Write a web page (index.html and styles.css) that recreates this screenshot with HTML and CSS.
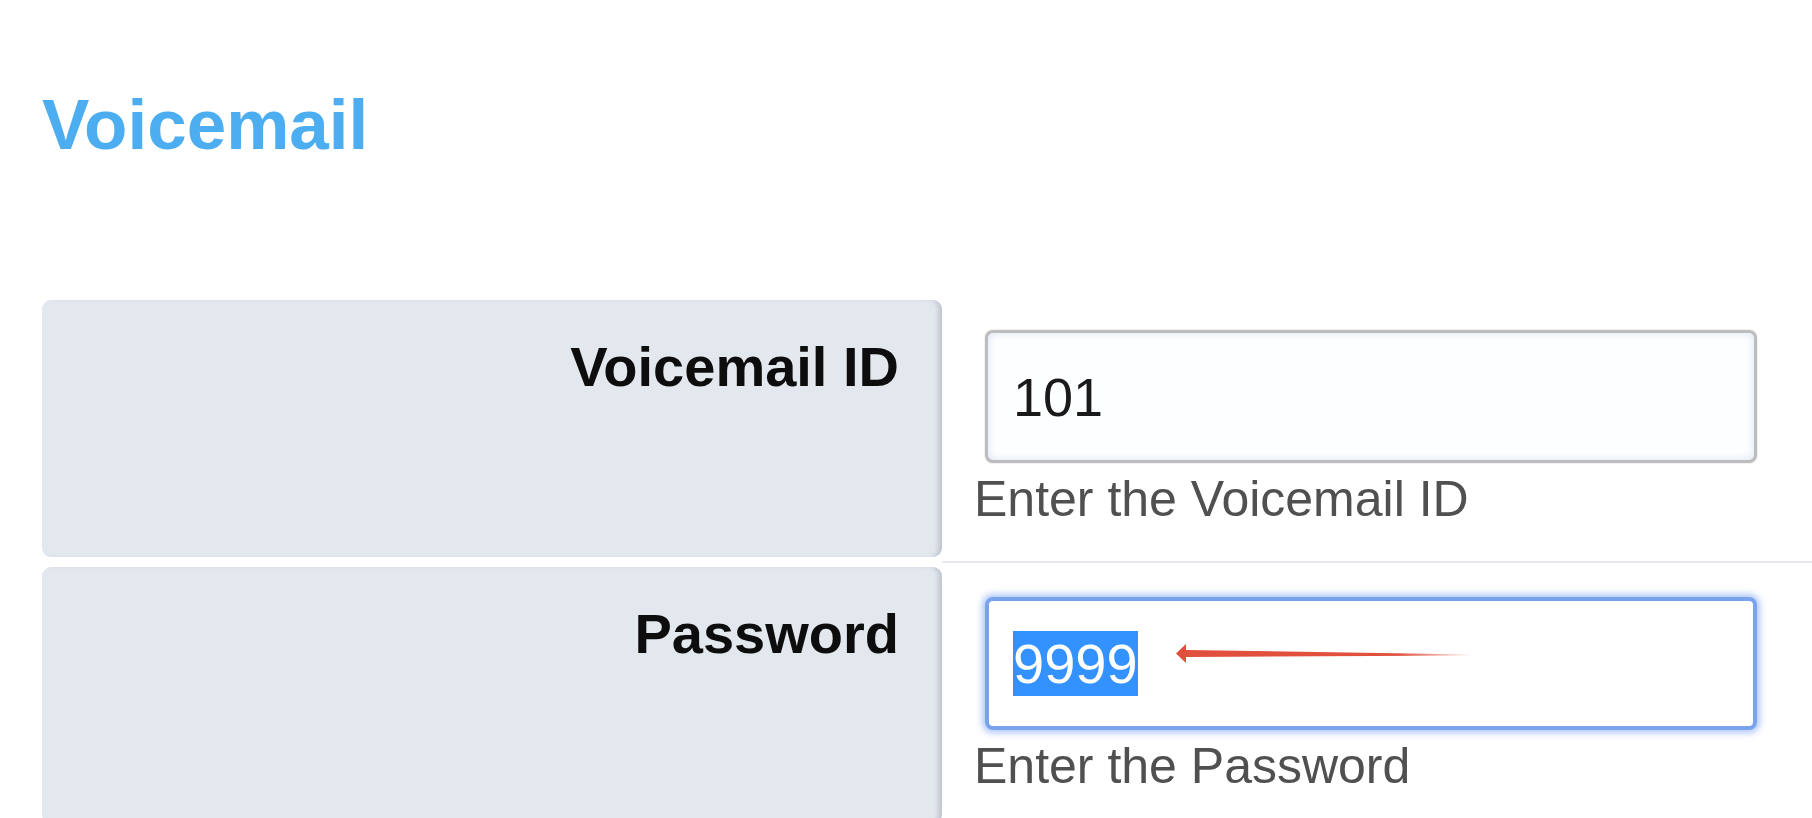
FILE: index.html
```html
<!DOCTYPE html>
<html lang="en">
<head>
<meta charset="utf-8">
<title>Voicemail</title>
<link rel="stylesheet" href="styles.css">
</head>
<body>
<div class="page">
  <h1 class="title">Voicemail</h1>
  <div class="form">
    <div class="row">
      <div class="label">Voicemail ID</div>
      <div class="cell">
        <div class="input"><span class="value">101</span></div>
        <div class="help">Enter the Voicemail ID</div>
      </div>
    </div>
    <div class="row">
      <div class="label">Password</div>
      <div class="cell">
        <div class="input focused">
          <span class="sel">9999</span>
          <svg class="arrow" width="300" height="26" viewBox="0 0 300 26" aria-hidden="true">
            <defs>
              <linearGradient id="fade" x1="0" y1="0" x2="1" y2="0">
                <stop offset="0" stop-color="#e0503c" stop-opacity="1"/>
                <stop offset="0.75" stop-color="#e0503c" stop-opacity="1"/>
                <stop offset="1" stop-color="#e0503c" stop-opacity="0"/>
              </linearGradient>
            </defs>
            <path d="M1 12.5 L11 3 L11 9 L298 13.4 L298 14.4 L11 16 L11 22 Z" fill="url(#fade)"/>
          </svg>
        </div>
        <div class="help">Enter the Password</div>
      </div>
    </div>
  </div>
</div>
</body>
</html>
```

FILE: styles.css
```css
html, body {
  margin: 0;
  background: #ffffff;
}

body {
  font-family: "Liberation Sans", Arial, sans-serif;
  overflow: hidden;
}

.page {
  padding: 86px 0 0 42px;
}

.title {
  margin: 0;
  font-size: 71px;
  line-height: 78px;
  font-weight: bold;
  color: #4caef0;
}

.form {
  margin-top: 136px;
}

.row {
  display: grid;
  grid-template-columns: 900px 1fr;
}

.label {
  box-sizing: border-box;
  height: 257px;
  margin-bottom: 10px;
  padding: 36px 43px 0 0;
  background: #e3e8ef;
  border-radius: 9px;
  box-shadow: inset -6px 0 4px -2px rgba(150, 160, 176, 0.45);
  text-align: right;
  font-size: 56px;
  line-height: 62px;
  font-weight: bold;
  color: #0d0d0d;
}

.cell {
  padding: 30px 0 0 43px;
  margin-bottom: 4px;
  border-bottom: 2px solid #e6e8ee;
}

.input {
  position: relative;
  box-sizing: border-box;
  width: 772px;
  height: 133px;
  padding-left: 25px;
  display: flex;
  align-items: center;
  border: 3px solid #bdbdbd;
  border-radius: 8px;
  background: #fdfeff;
  box-shadow: inset 0 0 8px rgba(190, 205, 235, 0.55), 0 0 2px rgba(0, 0, 0, 0.2);
}

.value {
  font-size: 54px;
  color: #1a1a1a;
}

.input.focused {
  border: 4px solid #7aa3ee;
  padding-left: 24px;
  background: #ffffff;
  box-shadow: 0 0 6px 3px rgba(110, 155, 240, 0.55);
}

.sel {
  font-size: 56px;
  background: #3392ff;
  color: #ffffff;
}

.arrow {
  position: absolute;
  left: 186px;
  top: 40px;
}

.help {
  margin: 8px 0 0 -11px;
  font-size: 50px;
  line-height: 56px;
  color: #505050;
}
```
